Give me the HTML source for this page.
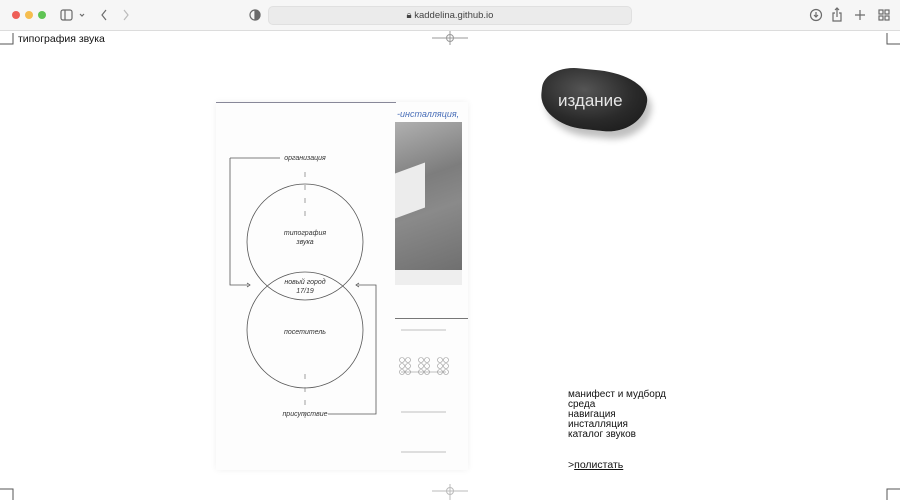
<!DOCTYPE html>
<html><head><meta charset="utf-8"><style>
*{margin:0;padding:0;box-sizing:border-box}
body{width:900px;height:500px;overflow:hidden;background:#fff;font-family:"Liberation Sans","DejaVu Sans",sans-serif;position:relative}
.bar{position:absolute;left:0;top:0;width:900px;height:31px;background:#f6f6f6;border-bottom:1px solid #dcdcdc}
.dot{position:absolute;top:11px;width:8px;height:8px;border-radius:50%}
.url{position:absolute;left:268px;top:6px;width:364px;height:19px;background:#ebebeb;border-radius:5px;border:1px solid #e0e0e0;font-size:9.5px;color:#444;text-align:center;line-height:18px}
.nav{position:absolute;left:568px;top:390px;font-size:10px;line-height:10px;color:#111}
</style></head><body>
<div class="bar">
<div class="dot" style="left:12px;background:#ee5f57"></div>
<div class="dot" style="left:25px;background:#f5bd4f"></div>
<div class="dot" style="left:38px;background:#5fc454"></div>
<svg style="position:absolute;left:0;top:0" width="900" height="31" fill="none" stroke="#6b6b6b" stroke-width="1.2">
<rect x="61" y="10" width="11" height="10" rx="2"/><line x1="65" y1="10" x2="65" y2="20"/>
<path d="M80 14l2 2 2-2"/>
<path d="M106 10l-4 5 4 5"/><path d="M124 10l4 5-4 5" stroke="#bbb"/>
<circle cx="255" cy="15" r="5"/><path d="M255 10a5 5 0 0 1 0 10z" fill="#6b6b6b"/>
<circle cx="816" cy="15" r="5.5"/><path d="M816 12v5m-2-2l2 2 2-2"/>
<path d="M835 13h-2v8h8v-8h-2M837 17V8m-2 2l2-2 2 2"/>
<path d="M860 10v10M855 15h10"/>
<rect x="879" y="10" width="4" height="4"/><rect x="885" y="10" width="4" height="4"/><rect x="879" y="16" width="4" height="4"/><rect x="885" y="16" width="4" height="4"/>
</svg>
<div class="url">🔒&#xFE0E; kaddelina.github.io</div>
</div>
<div style="position:absolute;left:18px;top:33px;font-size:10.5px;color:#111">типография звука</div>
<svg style="position:absolute;left:0;top:31px" width="900" height="469" fill="none" stroke="#555" stroke-width="1">
<path d="M13 2v11h-13M887 2v11h13M13 469v-11h-13M887 469v-11h13"/>
<path d="M432 7h36M450 0v14" stroke="#999"/><circle cx="450" cy="7" r="3.5" stroke="#999"/>
<path d="M432 460h36M450 453v16" stroke="#bbb"/><circle cx="450" cy="460" r="3.5" stroke="#bbb"/>
</svg>
<div style="position:absolute;left:216px;top:102px;width:252px;height:368px;background:#fdfdfd;box-shadow:0 0 6px rgba(0,0,0,.06)"></div>
<div style="position:absolute;left:216px;top:102px;width:180px;height:1px;background:#889"></div>
<div style="position:absolute;left:395px;top:122px;width:67px;height:163px;background:linear-gradient(160deg,#b0b0b0,#7d7d7d 35%,#8a8a8a 55%,#6a6a6a)"></div>
<div style="position:absolute;left:395px;top:168px;width:30px;height:45px;background:#ececec;transform:skewY(-20deg)"></div>
<div style="position:absolute;left:395px;top:270px;width:67px;height:15px;background:#eee"></div>
<div style="position:absolute;left:397px;top:109px;font-size:9px;font-style:italic;color:#4a6fb8">-инсталляция,</div>
<div style="position:absolute;left:395px;top:318px;width:73px;height:1px;background:#777"></div>
<svg style="position:absolute;left:216px;top:102px" width="252" height="368" fill="none" stroke="#555" stroke-width=".8">
<circle cx="89" cy="140" r="58"/><circle cx="89" cy="228" r="58"/>
<path d="M14 56h50M14 56v127h18M31 181l3 2-3 2M112 312h48V183h-18M143 181l-3 2 3 2"/>
<path d="M89 70v50M89 272v45" stroke-dasharray="5 8" stroke="#888"/>
<path d="M185 228h45M185 270h45M185 310h45M185 350h45" stroke="#aaa"/>
<g stroke="#999" stroke-width=".6">
<circle cx="186" cy="258" r="2.5"/><circle cx="192" cy="258" r="2.5"/><circle cx="186" cy="264" r="2.5"/><circle cx="192" cy="264" r="2.5"/><circle cx="186" cy="270" r="2.5"/><circle cx="192" cy="270" r="2.5"/>
<circle cx="205" cy="258" r="2.5"/><circle cx="211" cy="258" r="2.5"/><circle cx="205" cy="264" r="2.5"/><circle cx="211" cy="264" r="2.5"/><circle cx="205" cy="270" r="2.5"/><circle cx="211" cy="270" r="2.5"/>
<circle cx="224" cy="258" r="2.5"/><circle cx="230" cy="258" r="2.5"/><circle cx="224" cy="264" r="2.5"/><circle cx="230" cy="264" r="2.5"/><circle cx="224" cy="270" r="2.5"/><circle cx="230" cy="270" r="2.5"/>
</g>
<g fill="#333" stroke="none" font-size="7" font-style="italic" text-anchor="middle" font-family="Liberation Sans,sans-serif">
<text x="89" y="58">организация</text><text x="89" y="133">типография</text><text x="89" y="142">звука</text>
<text x="89" y="182">новый город</text><text x="89" y="191">17/19</text><text x="89" y="232">посетитель</text><text x="89" y="314">присутствие</text>
</g>
</svg>
<div style="position:absolute;left:541px;top:70px;width:106px;height:60px;border-radius:35% 50% 40% 45%/40% 45% 60% 55%;background:radial-gradient(ellipse at 40% 35%,#555,#2a2a2a 55%,#151515);box-shadow:5px 7px 7px rgba(0,0,0,.25);transform:rotate(6deg)"></div>
<div style="position:absolute;left:558px;top:91px;font-size:17px;color:#e6e6e6">издание</div>
<div class="nav">манифест и мудборд<br>среда<br>навигация<br>инсталляция<br>каталог звуков</div>
<div style="position:absolute;left:568px;top:459px;font-size:10.5px;color:#111">&gt;<span style="text-decoration:underline">полистать</span></div>
</body></html>
